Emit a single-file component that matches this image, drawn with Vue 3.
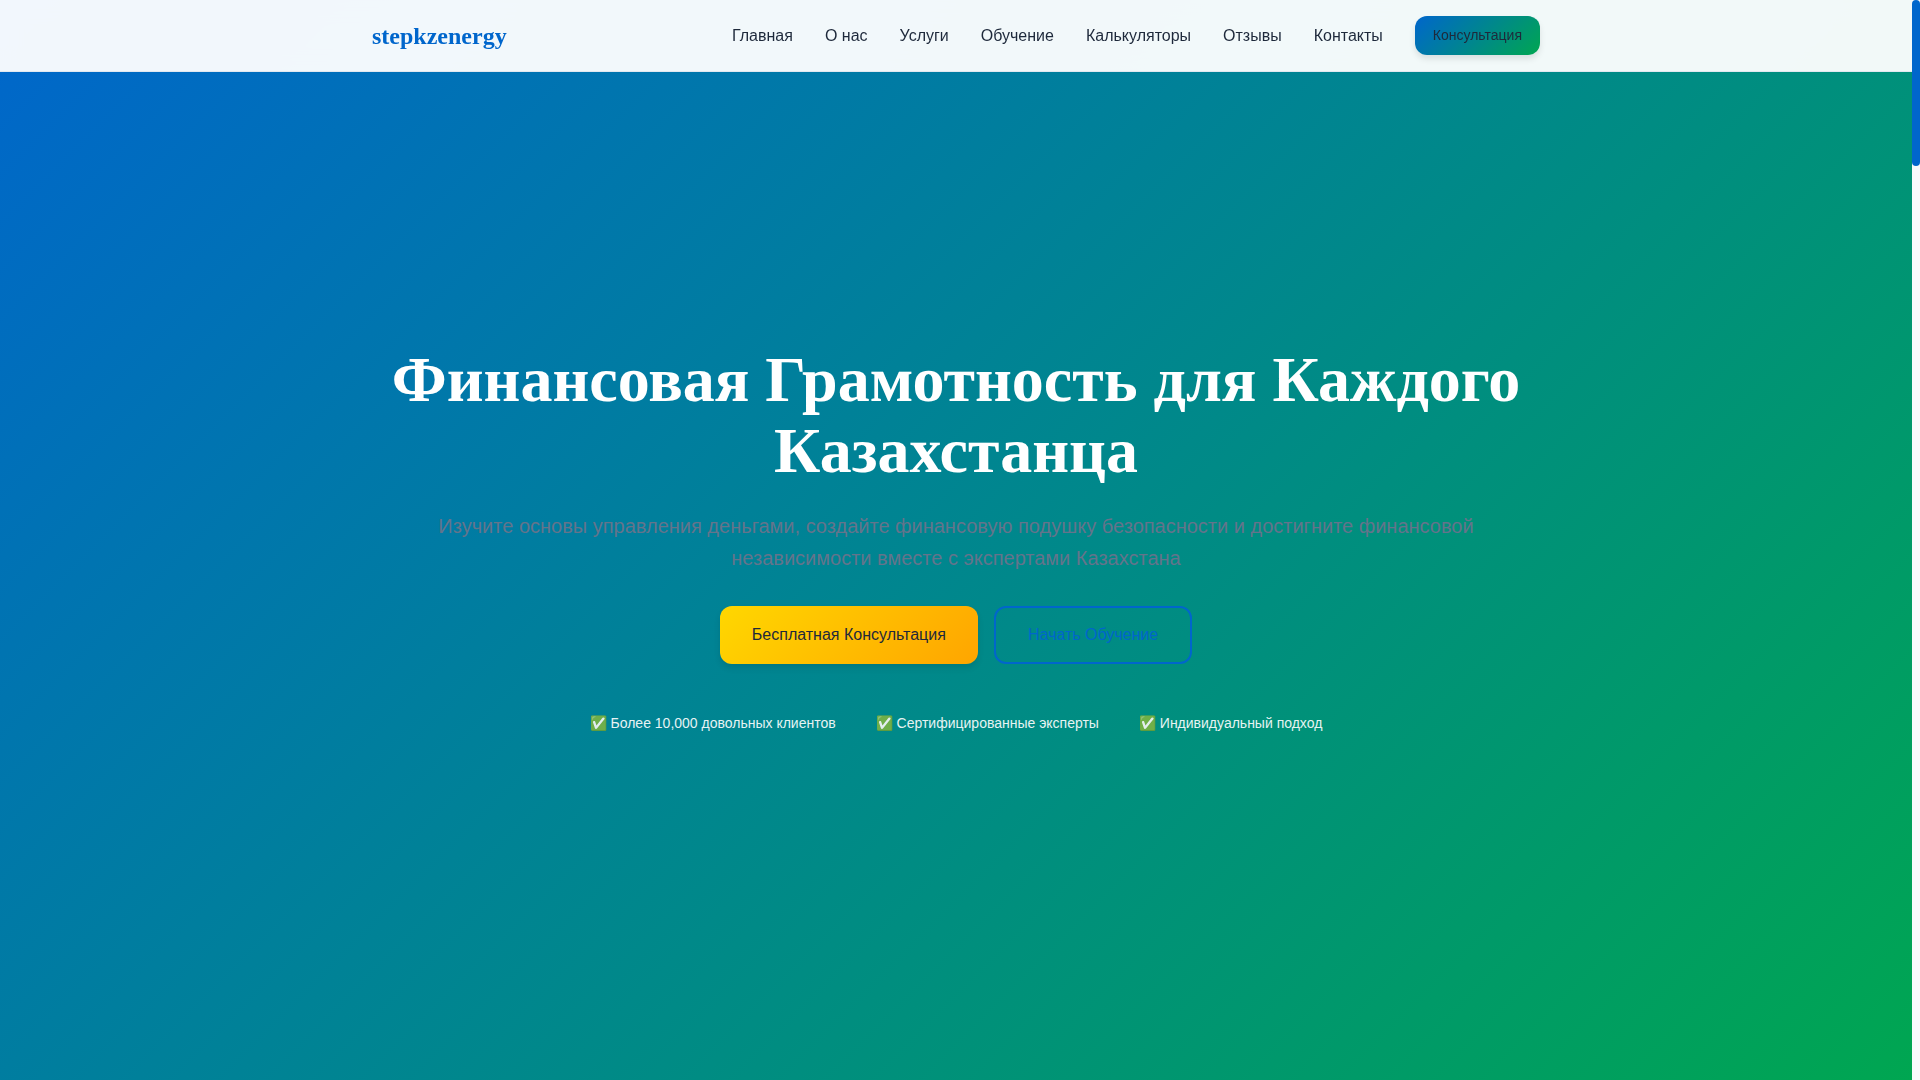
<!-- App.vue -->
<template>
  <div class="page">
    <div class="view">
      <header class="header">
        <div class="container header-inner">
          <a href="#home" class="logo">stepkzenergy</a>
          <nav class="nav">
            <a v-for="item in menu" :key="item.id" :href="'#' + item.id" class="nav-link">
              {{ item.title }}
            </a>
            <button type="button" class="btn btn-primary btn-small">Консультация</button>
          </nav>
        </div>
      </header>

      <section id="home" class="hero">
        <div class="container hero-content">
          <h1 class="hero-title">Финансовая Грамотность для Каждого Казахстанца</h1>
          <p class="hero-subtitle">
            Изучите основы управления деньгами, создайте финансовую подушку безопасности и
            достигните финансовой независимости вместе с экспертами Казахстана
          </p>
          <div class="hero-actions">
            <button type="button" class="btn btn-accent">Бесплатная Консультация</button>
            <button type="button" class="btn btn-outline">Начать Обучение</button>
          </div>
          <ul class="benefits">
            <li v-for="text in benefits" :key="text">✅ {{ text }}</li>
          </ul>
        </div>
      </section>
    </div>

    <div class="scroll-track">
      <div class="scroll-thumb"></div>
    </div>
  </div>
</template>

<script setup>
const menu = [
  { id: 'home', title: 'Главная' },
  { id: 'about', title: 'О нас' },
  { id: 'services', title: 'Услуги' },
  { id: 'education', title: 'Обучение' },
  { id: 'calculators', title: 'Калькуляторы' },
  { id: 'reviews', title: 'Отзывы' },
  { id: 'contacts', title: 'Контакты' },
]

const benefits = [
  'Более 10,000 довольных клиентов',
  'Сертифицированные эксперты',
  'Индивидуальный подход',
]
</script>

<style>
body {
  margin: 0;
  background: #f8fafc;
}
</style>

<style scoped>
.page {
  display: grid;
  grid-template-columns: 1fr 8px;
  min-height: 100vh;
  font-family: 'Liberation Sans', Arial, sans-serif;
  font-size: 16px;
  line-height: 26px;
  color: #1e293b;
}

.view {
  position: relative;
  display: flex;
}

.container {
  box-sizing: border-box;
  width: 100%;
  max-width: 1200px;
  margin: 0 auto;
  padding: 0 16px;
}

/* шапка поверх первого экрана */
.header {
  position: absolute;
  top: 0;
  left: 0;
  right: 0;
  z-index: 10;
  background: rgba(255, 255, 255, 0.95);
  border-bottom: 1px solid #e2e8f0;
  backdrop-filter: blur(10px);
}

.header-inner {
  display: flex;
  align-items: center;
  justify-content: space-between;
  padding-top: 16px;
  padding-bottom: 16px;
}

.logo {
  font-family: 'Liberation Serif', 'Times New Roman', serif;
  font-size: 24px;
  font-weight: 700;
  line-height: 38px;
  color: #0066cc;
  text-decoration: none;
}

.nav {
  display: flex;
  align-items: center;
  gap: 32px;
}

.nav-link {
  color: #1e293b;
  text-decoration: none;
}

.btn {
  padding: 16px 32px;
  border: none;
  border-radius: 12px;
  font-family: inherit;
  font-size: 16px;
  line-height: 26px;
  color: #1e293b;
  cursor: pointer;
}

.btn-small {
  padding: 8px 18px;
  font-size: 14px;
  line-height: 23px;
}

.btn-primary {
  background: linear-gradient(135deg, #0066cc 0%, #00a651 100%);
  box-shadow: 0 4px 6px rgba(0, 0, 0, 0.1);
}

.btn-accent {
  background: linear-gradient(135deg, #ffd700 0%, #ffa500 100%);
  box-shadow: 0 4px 6px rgba(0, 0, 0, 0.1);
}

.btn-outline {
  padding: 14px 32px;
  border: 2px solid #0066cc;
  background: transparent;
  color: #0066cc;
}

.hero {
  flex: 1;
  display: flex;
  align-items: center;
  background: linear-gradient(135deg, #0066cc 0%, #00a651 100%);
  text-align: center;
}

.hero-title {
  margin: 0 0 24px;
  font-family: 'Liberation Serif', 'Times New Roman', serif;
  font-size: 64px;
  font-weight: 700;
  line-height: 71px;
  color: #fff;
}

.hero-subtitle {
  margin: 0 0 32px;
  font-size: 20px;
  line-height: 32px;
  color: #64748b;
}

.hero-actions {
  display: flex;
  justify-content: center;
  gap: 16px;
  margin-bottom: 48px;
}

.benefits {
  display: flex;
  justify-content: center;
  gap: 40px;
  margin: 0;
  padding: 0 0 2px;
  list-style: none;
  font-size: 14px;
  line-height: 22px;
  color: #fff;
  opacity: 0.9;
}

/* полоса прокрутки */
.scroll-track {
  background: #f8fafc;
}

.scroll-thumb {
  height: 166px;
  border-radius: 4px;
  background: #0066cc;
}
</style>
